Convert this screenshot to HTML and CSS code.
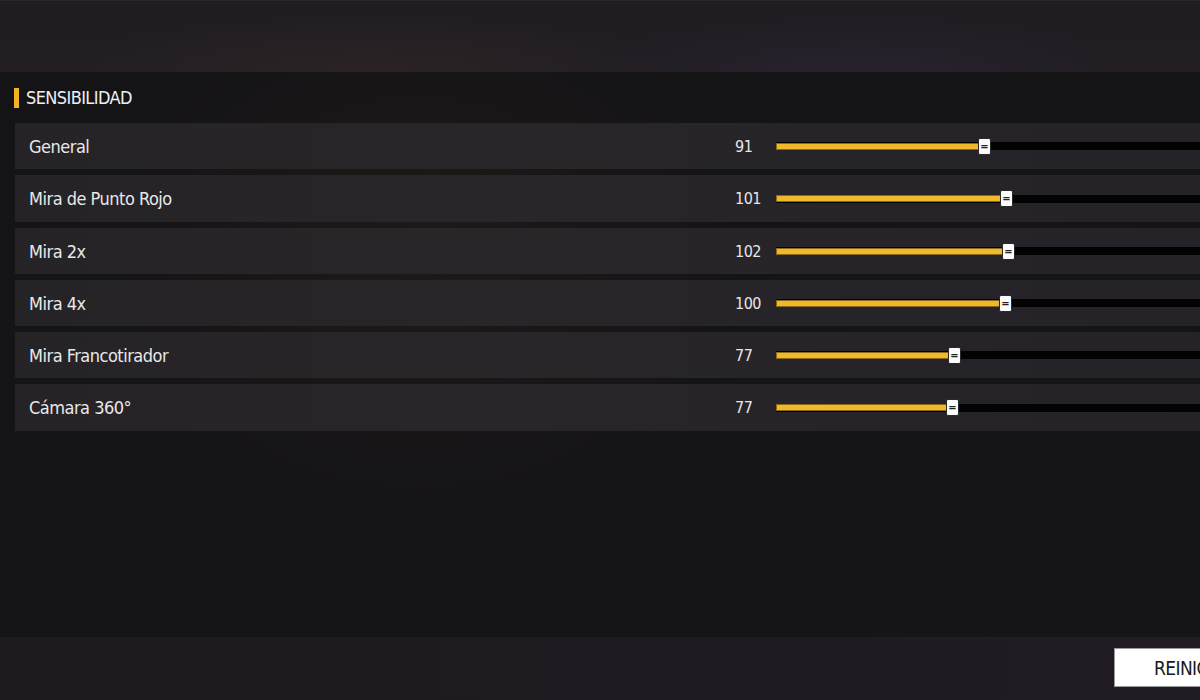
FILE: index.html
```html
<!DOCTYPE html>
<html lang="es">
<head>
<meta charset="utf-8">
<title>Sensibilidad</title>
<link rel="stylesheet" href="styles.css">
</head>
<body>
<div class="screen">
  <div class="topbar"></div>
  <main class="panel">
    <h2 class="section-title"><span class="accent"></span>SENSIBILIDAD</h2>
    <div class="rows">
      <div class="row">
        <span class="label">General</span>
        <span class="value">91</span>
        <div class="slider"><div class="fill" style="width:208px"></div><span class="thumb">=</span></div>
      </div>
      <div class="row">
        <span class="label">Mira de Punto Rojo</span>
        <span class="value">101</span>
        <div class="slider"><div class="fill" style="width:230px"></div><span class="thumb">=</span></div>
      </div>
      <div class="row">
        <span class="label">Mira 2x</span>
        <span class="value">102</span>
        <div class="slider"><div class="fill" style="width:232px"></div><span class="thumb">=</span></div>
      </div>
      <div class="row">
        <span class="label">Mira 4x</span>
        <span class="value">100</span>
        <div class="slider"><div class="fill" style="width:229px"></div><span class="thumb">=</span></div>
      </div>
      <div class="row">
        <span class="label">Mira Francotirador</span>
        <span class="value">77</span>
        <div class="slider"><div class="fill" style="width:178px"></div><span class="thumb">=</span></div>
      </div>
      <div class="row">
        <span class="label">Cámara 360°</span>
        <span class="value">77</span>
        <div class="slider"><div class="fill" style="width:176px"></div><span class="thumb">=</span></div>
      </div>
    </div>
  </main>
  <footer class="bottombar">
    <button class="reset">REINICIAR</button>
  </footer>
</div>
</body>
</html>
```
FILE: styles.css
```css
* { box-sizing: border-box; }
html, body {
  margin: 0;
  padding: 0;
  width: 1200px;
  height: 700px;
  overflow: hidden;
  background: #151417;
  font-family: "DejaVu Sans", "Liberation Sans", sans-serif;
  font-stretch: condensed;
  color: #e6e6e8;
}
.screen {
  display: flex;
  flex-direction: column;
  width: 1200px;
  height: 700px;
}
.topbar {
  height: 72px;
  flex: none;
  background:
    radial-gradient(ellipse 300px 60px at 370px 72px, rgba(60,45,35,0.35), transparent),
    radial-gradient(ellipse 260px 60px at 860px 72px, rgba(50,40,60,0.35), transparent),
    linear-gradient(180deg, #201d22 0%, #221e24 100%);
  border-top: 1px solid #2a2729;
}
.panel {
  flex: 1;
  background:
    radial-gradient(ellipse 320px 260px at 420px 180px, rgba(50,38,28,0.35), transparent),
    linear-gradient(180deg, #141316 0%, #151417 100%);
  display: flex;
  flex-direction: column;
}
.section-title {
  margin: 0;
  height: 51px;
  display: flex;
  align-items: center;
  gap: 7px;
  padding-left: 14px;
  font-size: 18px;
  font-weight: normal;
  letter-spacing: -0.6px;
  color: #f0f0f2;
}
.accent {
  width: 5px;
  height: 20px;
  background: #f2b424;
  display: block;
}
.rows {
  display: flex;
  flex-direction: column;
  gap: 6px;
  padding-left: 15px;
}
.row {
  height: 46px;
  display: flex;
  align-items: center;
  background: linear-gradient(90deg, #252326 0%, #29262a 40%, #262428 70%, #252328 100%);
  overflow: hidden;
}
.row:nth-child(2), .row:nth-child(6) { height: 47px; }
.label {
  width: 720px;
  padding-left: 14px;
  font-size: 18px;
  letter-spacing: -0.5px;
  color: #e8e8ea;
  flex: none;
}
.value {
  width: 41px;
  flex: none;
  font-size: 16px;
  letter-spacing: -0.5px;
  color: #e6e6e8;
}
.slider {
  position: relative;
  width: 460px;
  height: 8px;
  flex: none;
  background: #030303;
  display: flex;
  align-items: center;
}
.fill {
  height: 7px;
  background: #f0b92a;
  border: 1px solid #8a6a18;
  border-right: none;
}
.thumb {
  width: 13px;
  height: 17px;
  margin-left: -6px;
  background: #fbfbfb;
  border: 1px solid #2a2a2a;
  border-radius: 2px;
  color: #222;
  font-family: "DejaVu Sans", sans-serif;
  font-size: 11px;
  font-weight: bold;
  line-height: 15px;
  text-align: center;
  flex: none;
  position: relative;
  z-index: 1;
}
.bottombar {
  height: 63px;
  flex: none;
  background: linear-gradient(90deg, #1d1a1d 0%, #1f1b22 60%, #211c22 100%);
  display: flex;
  justify-content: flex-end;
  align-items: flex-start;
  padding-top: 11px;
}
.reset {
  width: 100px;
  margin-right: -14px;
  height: 39px;
  background: #ffffff;
  border: 1px solid #9a9a9a;
  border-right: none;
  color: #1a1a1a;
  font-family: "DejaVu Sans", sans-serif;
  font-stretch: condensed;
  font-size: 19px;
  letter-spacing: -0.6px;
  text-align: left;
  padding: 0 0 0 39px;
  white-space: nowrap;
  overflow: hidden;
}
```
